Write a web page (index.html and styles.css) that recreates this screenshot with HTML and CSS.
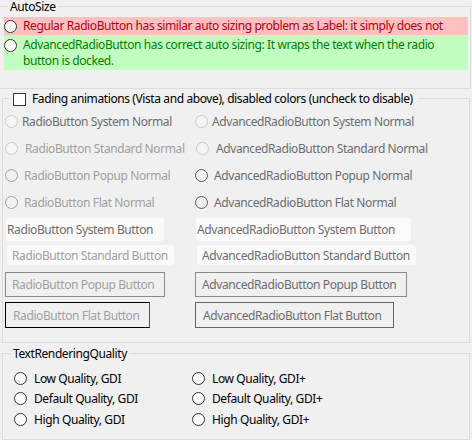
FILE: index.html
```html
<!DOCTYPE html>
<html lang="en">
<head>
    <title>AdvancedRadioButton demo</title>
    <link rel="stylesheet" href="styles.css">
</head>
<body>
    <div class="group group-autosize">
        <span class="legend">AutoSize</span>
        <div class="auto-row red">
            <span class="radio"></span>
            <span class="auto-text">Regular RadioButton has similar auto sizing problem as Label: it simply does not</span>
        </div>
        <div class="auto-row green">
            <span class="radio"></span>
            <span class="auto-text">AdvancedRadioButton has correct auto sizing: It wraps the text when the radio button is docked.</span>
        </div>
    </div>

    <div class="group group-fading">
        <span class="legend legend-check">
            <span class="checkbox"></span>
            Fading animations (Vista and above), disabled colors (uncheck to disable)
        </span>

        <div class="row radio-row">
            <div class="cell"><span class="radio sys"></span><span class="lbl dark">RadioButton System Normal</span></div>
            <div class="cell"><span class="radio sys"></span><span class="lbl dark">AdvancedRadioButton System Normal</span></div>
        </div>
        <div class="row radio-row">
            <div class="cell"><span class="radio sys"></span><span class="lbl light std">RadioButton Standard Normal</span></div>
            <div class="cell"><span class="radio sys nudge"></span><span class="lbl dark std">AdvancedRadioButton Standard Normal</span></div>
        </div>
        <div class="row radio-row">
            <div class="cell"><span class="radio off"></span><span class="lbl light pop">RadioButton Popup Normal</span></div>
            <div class="cell"><span class="radio mid"></span><span class="lbl dark pop">AdvancedRadioButton Popup Normal</span></div>
        </div>
        <div class="row radio-row">
            <div class="cell"><span class="radio off"></span><span class="lbl light pop">RadioButton Flat Normal</span></div>
            <div class="cell"><span class="radio mid"></span><span class="lbl dark pop">AdvancedRadioButton Flat Normal</span></div>
        </div>

        <div class="row btn-row-sys">
            <div class="cell"><span class="btn btn-sys dark">RadioButton System Button</span></div>
            <div class="cell"><span class="btn btn-sys btn-sys-adv dark">AdvancedRadioButton System Button</span></div>
        </div>
        <div class="row btn-row-std">
            <div class="cell"><span class="btn btn-std light">RadioButton Standard Button</span></div>
            <div class="cell"><span class="btn btn-std dark">AdvancedRadioButton Standard Button</span></div>
        </div>
        <div class="row btn-row-pop">
            <div class="cell"><span class="btn btn-pop light">RadioButton Popup Button</span></div>
            <div class="cell"><span class="btn btn-pop dark">AdvancedRadioButton Popup Button</span></div>
        </div>
        <div class="row btn-row-flat">
            <div class="cell"><span class="btn btn-flat light">RadioButton Flat Button</span></div>
            <div class="cell"><span class="btn btn-flat btn-flat-adv dark">AdvancedRadioButton Flat Button</span></div>
        </div>
    </div>

    <div class="group group-quality">
        <span class="legend">TextRenderingQuality</span>
        <div class="q-row">
            <div class="q-cell"><span class="radio"></span><span class="q-lbl">Low Quality, GDI</span></div>
            <div class="q-cell"><span class="radio"></span><span class="q-lbl">Low Quality, GDI+</span></div>
        </div>
        <div class="q-row">
            <div class="q-cell"><span class="radio"></span><span class="q-lbl">Default Quality, GDI</span></div>
            <div class="q-cell"><span class="radio"></span><span class="q-lbl">Default Quality, GDI+</span></div>
        </div>
        <div class="q-row">
            <div class="q-cell"><span class="radio"></span><span class="q-lbl">High Quality, GDI</span></div>
            <div class="q-cell"><span class="radio"></span><span class="q-lbl">High Quality, GDI+</span></div>
        </div>
    </div>
</body>
</html>
```

FILE: styles.css
```css
body {
    margin: 0;
    background-color: #f0f0f0;
    font-family: "Noto Sans", "Open Sans", sans-serif;
    font-size: 12px;
    letter-spacing: -0.4px;
    color: #000;
    width: 472px;
    height: 440px;
    overflow: hidden;
}

.group {
    position: relative;
    box-sizing: border-box;
    border: 1px solid #dcdcdc;
}

.legend {
    position: absolute;
    top: -6px;
    left: 8px;
    padding: 0 2px;
    line-height: 12px;
    background-color: #f0f0f0;
    white-space: nowrap;
}

/* AutoSize */
.group-autosize {
    margin: 6px 0 0 -1px;
    width: 472px;
    height: 83px;
    padding-top: 10px;
}

.auto-row {
    display: flex;
    align-items: flex-start;
    margin-left: 4px;
    width: 464px;
}

.auto-row .radio {
    margin-top: 2px;
}

.auto-text {
    margin-left: 6px;
    line-height: 16px;
}

.red {
    background-color: #ffc0c0;
    color: #b00018;
    height: 18px;
    padding-top: 1px;
    box-sizing: border-box;
}

.green {
    background-color: #c0ffc0;
    color: #008000;
    height: 35px;
    padding-top: 2px;
    box-sizing: border-box;
}

/* radio circles */
.radio {
    flex: none;
    display: inline-block;
    box-sizing: border-box;
    width: 13px;
    height: 13px;
    border-radius: 50%;
    border: 1px solid #333;
    background-color: #fff;
}

.radio.sys {
    border-color: #cccccc;
    background-color: #f5f5f5;
}

.radio.off {
    border-color: #a0a0a0;
    background-color: transparent;
}

.radio.mid {
    border-color: #5a5a5a;
    background-color: transparent;
}

.radio.nudge {
    margin-left: 1px;
}

/* Fading group */
.legend-check {
    display: flex;
    align-items: center;
    left: 7px;
    top: -7px;
    line-height: 14px;
    padding: 0 5px 0 3px;
}

.checkbox {
    display: inline-block;
    box-sizing: border-box;
    width: 13px;
    height: 13px;
    border: 1px solid #333;
    background-color: #fff;
    margin-right: 6px;
}

.group-fading {
    margin: 9px 0 0 2px;
    width: 468px;
    height: 245px;
    padding: 9px 0 0 2px;
}

.row {
    display: flex;
}

.cell {
    display: flex;
    align-items: center;
    width: 190px;
    flex: none;
    white-space: nowrap;
}

.radio-row {
    height: 27px;
}

.lbl {
    margin-left: 4px;
}

.lbl.std {
    margin-left: 7px;
}

.lbl.pop {
    margin-left: 6px;
}

.dark {
    color: #6d6d6d;
}

.light {
    color: #a0a0a0;
}

.btn {
    box-sizing: border-box;
    display: flex;
    align-items: center;
    white-space: nowrap;
}

.btn-row-sys {
    margin-top: 2px;
    height: 23px;
}

.btn-row-std {
    margin-top: 4px;
    height: 20px;
}

.btn-row-pop {
    margin-top: 7px;
    height: 25px;
}

.btn-row-flat {
    margin-top: 5px;
    height: 26px;
}

.btn-sys {
    height: 23px;
    margin-left: 1px;
    padding: 0 11px 0 1px;
    background-color: #fafafa;
    border-radius: 3px;
}

.btn-sys-adv {
    padding-right: 16px;
}

.btn-std {
    height: 20px;
    margin-left: 2px;
    padding: 0 6px 0 5px;
    background-color: #fafafa;
    border-radius: 3px;
}

.btn-pop {
    height: 25px;
    padding: 0 10px 0 6px;
    border: 1px solid #8c8c8c;
}

.btn-flat {
    height: 26px;
    padding: 0 10px 0 7px;
    border: 1px solid #000;
    border-right-color: #555;
}

.btn-flat-adv {
    border-color: #646464;
    padding-right: 12px;
}

/* TextRenderingQuality */
.group-quality {
    margin: 10px 0 0 2px;
    width: 468px;
    height: 87px;
    padding: 14px 0 0 11px;
}

.q-row {
    display: flex;
    height: 20.5px;
    align-items: center;
}

.q-cell {
    display: flex;
    align-items: center;
    width: 178px;
    flex: none;
}

.q-lbl {
    margin-left: 7px;
}
```
